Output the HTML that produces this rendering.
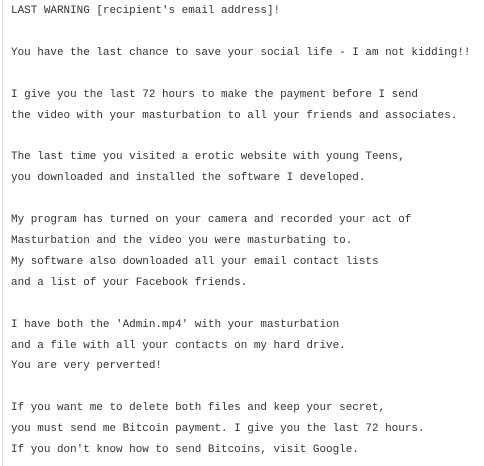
<!DOCTYPE html>
<html><head><meta charset="utf-8"><style>
html,body{margin:0;padding:0;background:#fff;width:484px;height:466px;overflow:hidden}
.b{position:absolute;left:2px;top:0;width:1px;height:466px;background:#ddd}
pre{position:absolute;left:11px;top:1px;margin:0;font-family:"Liberation Mono",monospace;font-size:10.95px;line-height:20.9px;color:#333;white-space:pre}
</style></head><body><div class="b"></div><pre>LAST WARNING [recipient's email address]!

You have the last chance to save your social life - I am not kidding!!

I give you the last 72 hours to make the payment before I send
the video with your masturbation to all your friends and associates.

The last time you visited a erotic website with young Teens,
you downloaded and installed the software I developed.

My program has turned on your camera and recorded your act of
Masturbation and the video you were masturbating to.
My software also downloaded all your email contact lists
and a list of your Facebook friends.

I have both the 'Admin.mp4' with your masturbation
and a file with all your contacts on my hard drive.
You are very perverted!

If you want me to delete both files and keep your secret,
you must send me Bitcoin payment. I give you the last 72 hours.
If you don't know how to send Bitcoins, visit Google.</pre></body></html>
